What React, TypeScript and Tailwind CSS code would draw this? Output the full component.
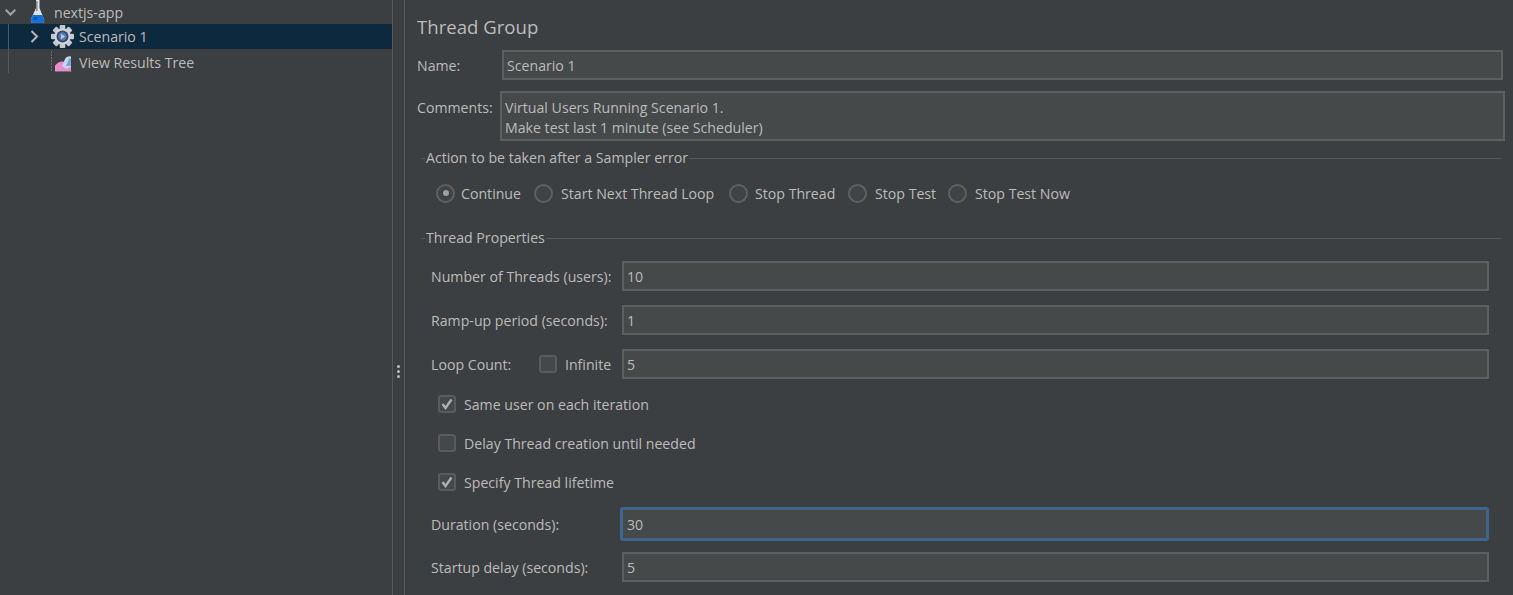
import React from "react";

const font = "[font-family:'Open_Sans','Noto_Sans',sans-serif]";

function Field({ value, focus }: { value: string; focus?: boolean }) {
  return (
    <div
      className={
        focus
          ? "flex h-[34px] w-[869px] items-center rounded-[3px] border-[3px] border-[#3f658c] bg-[#45494a] pl-[4px] pt-[2px] text-[#bbbbbb]"
          : "flex h-[30px] w-[867px] items-center border-2 border-[#5e6060] bg-[#45494a] pl-[3px] pt-[2px] text-[#bbbbbb]"
      }
    >
      {value}
    </div>
  );
}

function Radio({ label, on, w, gap }: { label: string; on?: boolean; w: string; gap: string }) {
  return (
    <div className={`flex items-center ${w}`}>
      <span className="flex h-[19px] w-[19px] items-center justify-center rounded-full border-2 border-[#5e6060] bg-[#3f4345]">
        {on && <span className="h-[6px] w-[6px] rounded-full bg-[#a0a0a0]" />}
      </span>
      <span className={`pt-[2px] ${gap}`}>{label}</span>
    </div>
  );
}

function Check({ on }: { on?: boolean }) {
  return (
    <span className="flex h-[18px] w-[18px] shrink-0 items-center justify-center rounded-[3px] border-2 border-[#595b5c] bg-[#43484a]">
      {on && (
        <svg width="12" height="12" viewBox="0 0 12 12" fill="none">
          <path d="M1.5 6 L4.5 10 L10.5 1.5" stroke="#afafaf" strokeWidth="2.4" />
        </svg>
      )}
    </span>
  );
}

function Legend({ text }: { text: string }) {
  return (
    <div className="ml-[16px] mr-[11px] flex items-center">
      <span className="h-px w-[4px] bg-[#55585a]" />
      <span className="px-[1px]">{text}</span>
      <span className="h-px flex-1 bg-[#55585a]" />
    </div>
  );
}

function FlaskIcon() {
  return (
    <svg width="15" height="24" viewBox="0 0 15 24" className="shrink-0">
      <path d="M6 0 H9.5 V8 L13.5 18 Q15.5 23 12 23 H3 Q-0.5 23 1.5 18 L6 8 Z" fill="#dfe3e8" />
      <path d="M6 1 H7.5 V11 L6 11 Z" fill="#868c92" />
      <path d="M3 15 H12.3 L13.5 18 Q15.5 23 12 23 H3 Q-0.5 23 1.5 18 Z" fill="#1270dc" />
      <path d="M4 17 H8 L7 20 H3.5 Z" fill="#0b55b4" />
    </svg>
  );
}

function GearIcon() {
  const teeth = [0, 45, 90, 135];
  return (
    <svg width="23" height="23" viewBox="0 0 23 23" className="shrink-0">
      {teeth.map((a) => (
        <rect key={a} x="8.7" y="0" width="5.6" height="23" rx="1" fill="#c5c9cd" transform={`rotate(${a} 11.5 11.5)`} />
      ))}
      <circle cx="11.5" cy="11.5" r="8" fill="#d2d5d8" />
      <circle cx="11.5" cy="11.5" r="6" fill="#2f4873" />
      <circle cx="11.5" cy="11.5" r="4.2" fill="#5877ac" />
      <path d="M10 8.7 L14.2 11.5 L10 14.3 Z" fill="#b9c9e2" />
    </svg>
  );
}

function ResultsIcon() {
  return (
    <svg width="21" height="21" viewBox="0 0 21 21" className="shrink-0">
      <path d="M0.5 0 V20.5" stroke="#6d7072" strokeDasharray="2 1" fill="none" />
      <path d="M4 20.5 H20.5" stroke="#6d7072" fill="none" />
      <path d="M4 20 V14.5 Q8 10 12 10.5 L20 15 V20 Z" fill="#ee88d0" />
      <path d="M11 15 L14.5 7 Q17 4.5 20 5.5 V16 L17 17 Q15 18 14 17 Z" fill="#c4d8f0" />
      <path d="M15 15 L18 7.5 L20 7.5 V15 Z" fill="#7ba4d6" />
    </svg>
  );
}

export default function App() {
  return (
    <div className={`flex h-[595px] w-[1513px] overflow-hidden bg-[#3c3f41] text-[14.15px] leading-[20px] text-[#bbbbbb] ${font}`}>
      {/* Tree */}
      <div className="flex h-full w-[392px] shrink-0 flex-col">
        <div className="flex h-[24px] items-center pl-[5px]">
          <svg width="11" height="7" viewBox="0 0 11 7" fill="none">
            <path d="M0.7 0.7 L5.5 5.5 L10.3 0.7" stroke="#a0a3a5" strokeWidth="2" />
          </svg>
          <span className="ml-[14px] block h-[24px]"><FlaskIcon /></span>
          <span className="ml-[9px] pt-[2px]">nextjs-app</span>
        </div>
        <div className="relative flex h-[25px] items-center bg-[#0d293e] pl-[30px]">
          <svg width="9" height="13" viewBox="0 0 9 13" fill="none">
            <path d="M1.5 1 L7 6.5 L1.5 12" stroke="#b4b7b9" strokeWidth="2" />
          </svg>
          <span className="ml-[12px] block h-[23px]"><GearIcon /></span>
          <span className="ml-[5px]">Scenario 1</span>
          <span className="absolute left-[8px] top-0 h-full w-px bg-[#4a5a66]" />
        </div>
        <div className="relative flex h-[25px] items-center pl-[51px]">
          <ResultsIcon />
          <span className="ml-[7px] pt-[2px]">View Results Tree</span>
          <span className="absolute left-[8px] top-0 h-[24px] w-px bg-[#555759]" />
        </div>
      </div>

      {/* Splitter */}
      <div className="flex h-full w-[13px] shrink-0 items-center justify-center border-x border-[#555759] pt-[148px]">
        <div className="flex flex-col gap-[2px]">
          <span className="h-[3px] w-[3px] rounded-full bg-[#bbbbbb]" />
          <span className="h-[3px] w-[3px] rounded-full bg-[#bbbbbb]" />
          <span className="h-[3px] w-[3px] rounded-full bg-[#bbbbbb]" />
        </div>
      </div>

      {/* Form */}
      <div className="flex min-w-0 flex-1 flex-col">
        <div className="ml-[12px] mt-[14px] text-[18.6px] leading-[26px]">Thread Group</div>

        <div className="mt-[10px] flex items-center">
          <span className="ml-[12px] w-[85px] pt-[2px]">Name:</span>
          <div className="flex h-[30px] w-[1001px] items-center border-2 border-[#5e6060] bg-[#45494a] pl-[3px] pt-[2px]">Scenario 1</div>
        </div>

        <div className="mt-[11px] flex items-start">
          <span className="ml-[12px] mt-[7px] w-[83px]">Comments:</span>
          <div className="h-[50px] w-[1005px] border-2 border-[#5e6060] bg-[#45494a] pl-[3px] pt-[5px]">
            <div>Virtual Users Running Scenario 1.</div>
            <div>Make test last 1 minute (see Scheduler)</div>
          </div>
        </div>

        <div className="mt-[7px]"><Legend text="Action to be taken after a Sampler error" /></div>

        <div className="ml-[31px] mt-[15px] flex h-[20px] items-center">
          <Radio label="Continue" on w="w-[98px]" gap="ml-[6px]" />
          <Radio label="Start Next Thread Loop" w="w-[195px]" gap="ml-[8px]" />
          <Radio label="Stop Thread" w="w-[119px]" gap="ml-[7px]" />
          <Radio label="Stop Test" w="w-[100px]" gap="ml-[8px]" />
          <Radio label="Stop Test Now" w="w-[140px]" gap="ml-[8px]" />
        </div>

        <div className="mt-[25px]"><Legend text="Thread Properties" /></div>

        <div className="mt-[13px] flex items-center">
          <span className="ml-[26px] w-[191px] pt-[2px]">Number of Threads (users):</span>
          <Field value="10" />
        </div>
        <div className="mt-[14px] flex items-center">
          <span className="ml-[26px] w-[191px] pt-[2px]">Ramp-up period (seconds):</span>
          <Field value="1" />
        </div>
        <div className="mt-[14px] flex items-center">
          <span className="ml-[26px] w-[108px] pt-[2px]">Loop Count:</span>
          <Check />
          <span className="ml-[8px] w-[57px] pt-[2px]">Infinite</span>
          <Field value="5" />
        </div>

        <div className="ml-[33px] mt-[15px] flex h-[20px] items-center">
          <Check on />
          <span className="ml-[8px] pt-[2px]">Same user on each iteration</span>
        </div>
        <div className="ml-[33px] mt-[19px] flex h-[20px] items-center">
          <Check />
          <span className="ml-[8px] pt-[2px]">Delay Thread creation until needed</span>
        </div>
        <div className="ml-[33px] mt-[19px] flex h-[20px] items-center">
          <Check on />
          <span className="ml-[8px] pt-[2px]">Specify Thread lifetime</span>
        </div>

        <div className="mt-[15px] flex items-center">
          <span className="ml-[26px] w-[189px] pt-[2px]">Duration (seconds):</span>
          <Field value="30" focus />
        </div>
        <div className="mt-[11px] flex items-center">
          <span className="ml-[26px] w-[191px] pt-[2px]">Startup delay (seconds):</span>
          <Field value="5" />
        </div>
      </div>
    </div>
  );
}
